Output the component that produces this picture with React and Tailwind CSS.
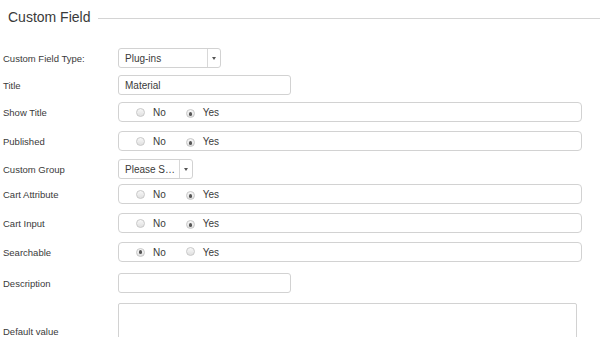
import React from "react";

const font = { fontFamily: '"Liberation Sans", Arial, sans-serif' };

function Radio({ checked }) {
  return (
    <span className="inline-flex h-[9px] w-[9px] items-center justify-center rounded-full border border-[#c8c8c8] bg-gradient-to-b from-[#f8f8f8] to-[#e0e0e0]">
      {checked && <span className="h-[3.5px] w-[3.5px] rounded-full bg-[#555]" />}
    </span>
  );
}

function RadioBox({ yes }) {
  return (
    <div className="flex h-[20px] w-[464px] items-center rounded-[4px] border border-[#d2d2d2] bg-white pl-[17px] text-[10px] text-[#3a3a3a]">
      <Radio checked={!yes} />
      <span className="ml-[8px]">No</span>
      <span className="ml-[20px]"><Radio checked={yes} /></span>
      <span className="ml-[8px]">Yes</span>
    </div>
  );
}

function Select({ text, w, divider }) {
  return (
    <div
      className="flex h-[20px] items-center rounded-[3px] border border-[#d2d2d2] bg-white text-[10px] text-[#3a3a3a]"
      style={{ width: w }}
    >
      <span className="pl-[6px]" style={{ width: divider }}>{text}</span>
      <span className="flex h-full flex-1 items-center justify-center border-l border-[#d8d8d8]">
        <span className="h-0 w-0 border-l-[2.5px] border-r-[2.5px] border-t-[3px] border-l-transparent border-r-transparent border-t-[#555]" />
      </span>
    </div>
  );
}

function Row({ label, mt, children, lpt = "pt-[3px]" }) {
  return (
    <div className="flex h-[20px] items-center" style={{ marginTop: mt }}>
      <div className={`w-[118px] pl-[3px] text-[9.5px] text-[#3a3a3a] ${lpt}`}>{label}</div>
      {children}
    </div>
  );
}

export default function App() {
  return (
    <div className="h-[337px] w-[600px] overflow-hidden bg-white" style={font}>
      <div className="flex h-[20px] items-center mt-[7px]">
        <span className="pl-[8px] text-[14px] leading-[20px] text-[#3a3a3a]">Custom Field</span>
        <span className="ml-[8px] mt-[2px] h-px flex-1 bg-[#d4d4d4]" />
      </div>
      <Row label="Custom Field Type:" mt={21}>
        <Select text="Plug-ins" w={103} divider={88} />
      </Row>
      <Row label="Title" mt={7}>
        <div className="flex h-[20px] w-[173px] items-center rounded-[3px] border border-[#d2d2d2] bg-white pl-[6px] text-[10px] text-[#3a3a3a]">
          Material
        </div>
      </Row>
      <Row label="Show Title" mt={7}>
        <RadioBox yes />
      </Row>
      <Row label="Published" mt={9}>
        <RadioBox yes />
      </Row>
      <Row label="Custom Group" mt={8}>
        <Select text="Please S…" w={75} divider={60} />
      </Row>
      <Row label="Cart Attribute" mt={5}>
        <RadioBox yes />
      </Row>
      <Row label="Cart Input" mt={9}>
        <RadioBox yes />
      </Row>
      <Row label="Searchable" mt={9}>
        <RadioBox yes={false} />
      </Row>
      <Row label="Description" mt={11}>
        <div className="h-[20px] w-[173px] rounded-[3px] border border-[#d2d2d2] bg-white" />
      </Row>
      <div className="mt-[10px] flex h-[58px] items-center">
        <div className="w-[118px] pl-[3px] text-[9.5px] text-[#3a3a3a]">Default value</div>
        <div className="h-[58px] w-[459px] rounded-[2px] border border-[#d2d2d2] bg-white" />
      </div>
    </div>
  );
}
